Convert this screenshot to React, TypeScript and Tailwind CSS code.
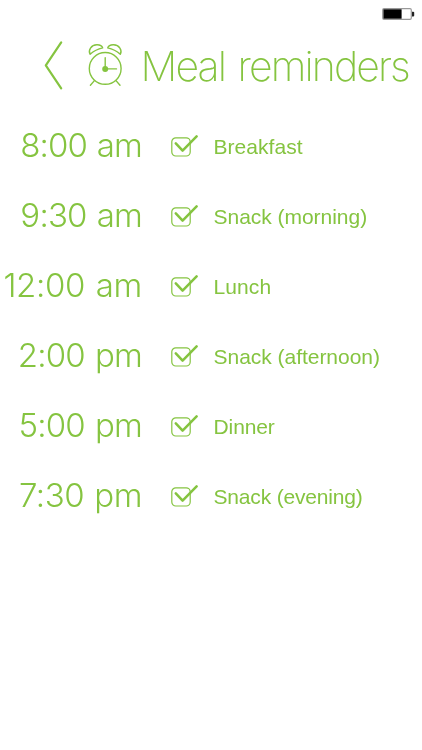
const reminders = [
  { time: "8:00 am", label: "Breakfast", timeTracking: "tracking-[-0.9px]", labelTracking: "tracking-[0.05px]" },
  { time: "9:30 am", label: "Snack (morning)", timeTracking: "tracking-[-0.8px]", labelTracking: "tracking-[-0.03px]" },
  { time: "12:00 am", label: "Lunch", timeTracking: "tracking-[-0.3px]", labelTracking: "tracking-[0.1px]" },
  { time: "2:00 pm", label: "Snack (afternoon)", timeTracking: "tracking-[-0.8px]", labelTracking: "tracking-[-0.03px]" },
  { time: "5:00 pm", label: "Dinner", timeTracking: "tracking-[-0.8px]", labelTracking: "tracking-[-0.1px]" },
  { time: "7:30 pm", label: "Snack (evening)", timeTracking: "tracking-[-0.5px]", labelTracking: "tracking-[-0.17px]" },
];

function BackIcon() {
  return (
    <svg className="h-[52px] w-[20px] shrink-0" viewBox="0 0 20 52" fill="none" stroke="currentColor" strokeWidth="2.2" strokeLinecap="round" strokeLinejoin="round">
      <path d="M18.2 2.3 2.8 25.3 18.2 48.3" />
    </svg>
  );
}

function AlarmIcon() {
  return (
    <svg className="h-[44px] w-[37px] shrink-0" viewBox="0 0 37 44" fill="none" stroke="currentColor" strokeWidth="1.4" strokeLinecap="round" strokeLinejoin="round">
      <circle cx="18.2" cy="25.4" r="15.9" />
      <path d="M3.1 11.2C.9 7.2 4.1 2 9.8 1.8c2.9-.1 5.2 1.1 5.9 3.1Q8.5 6.4 3.1 11.2Z" />
      <path d="M33.3 11.2C35.5 7.2 32.3 2 26.6 1.8c-2.9-.1-5.2 1.1-5.9 3.1Q27.9 6.4 33.3 11.2Z" />
      <path d="M18.2 25.7V14.7M18.2 25.9h11.3M7.4 37.6l-4 4.6M29 37.6l4 4.6" />
      <circle cx="18.2" cy="25.9" r="3" fill="currentColor" stroke="none" />
    </svg>
  );
}

function CheckIcon() {
  return (
    <svg className="h-[24px] w-[28px] shrink-0" viewBox="0 0 28 24" fill="none" stroke="currentColor">
      <rect x="1.8" y="3.8" width="18.4" height="18.2" rx="4" strokeWidth="1.2" />
      <path d="M5.8 9.3 12.6 16.7 26.6 2.4" strokeWidth="2.5" strokeLinecap="round" strokeLinejoin="round" />
    </svg>
  );
}

export default function App() {
  return (
    <main className="h-[750px] w-[422px] overflow-hidden bg-white text-[#85c440]">
      <div className="flex h-[28px] justify-end pt-[8px] pr-[7px]">
        <svg className="h-[12px] w-[33px]" viewBox="0 0 33 12" fill="none">
          <rect x=".7" y=".7" width="28.6" height="10.6" rx="1.3" stroke="#999" strokeWidth="1.2" />
          <rect x="1.4" y="1.3" width="18.2" height="9.4" fill="#000" />
          <path d="M30 3.8h1.2q1 0 1 1v2.6q0 1-1 1H30z" fill="#222" />
        </svg>
      </div>
      <header className="flex h-[83px] pl-[43px] will-change-transform">
        <div className="pt-[12px]"><BackIcon /></div>
        <div className="ml-[24px] pt-[15px]"><AlarmIcon /></div>
        <h1 className="ml-[16.5px] pt-[12px] whitespace-nowrap font-['Inter',sans-serif] text-[41px] leading-[52px] font-extralight tracking-[-1.9px] [word-spacing:3px]">Meal reminders</h1>
      </header>
      <ul className="will-change-transform">
        {reminders.map((r) => (
          <li key={r.time} className="flex h-[70px] items-center">
            <span className={`flex w-[142px] shrink-0 justify-end whitespace-pre pb-[2px] font-['Inter',sans-serif] text-[33px] leading-[40px] font-light [word-spacing:1.5px] ${r.timeTracking}`}>{r.time}</span>
            <div className="ml-[28px]"><CheckIcon /></div>
            <span className={`ml-[15.5px] pt-[2px] whitespace-nowrap font-['Liberation_Sans',sans-serif] text-[21px] leading-[28px] ${r.labelTracking}`}>{r.label}</span>
          </li>
        ))}
      </ul>
    </main>
  );
}
